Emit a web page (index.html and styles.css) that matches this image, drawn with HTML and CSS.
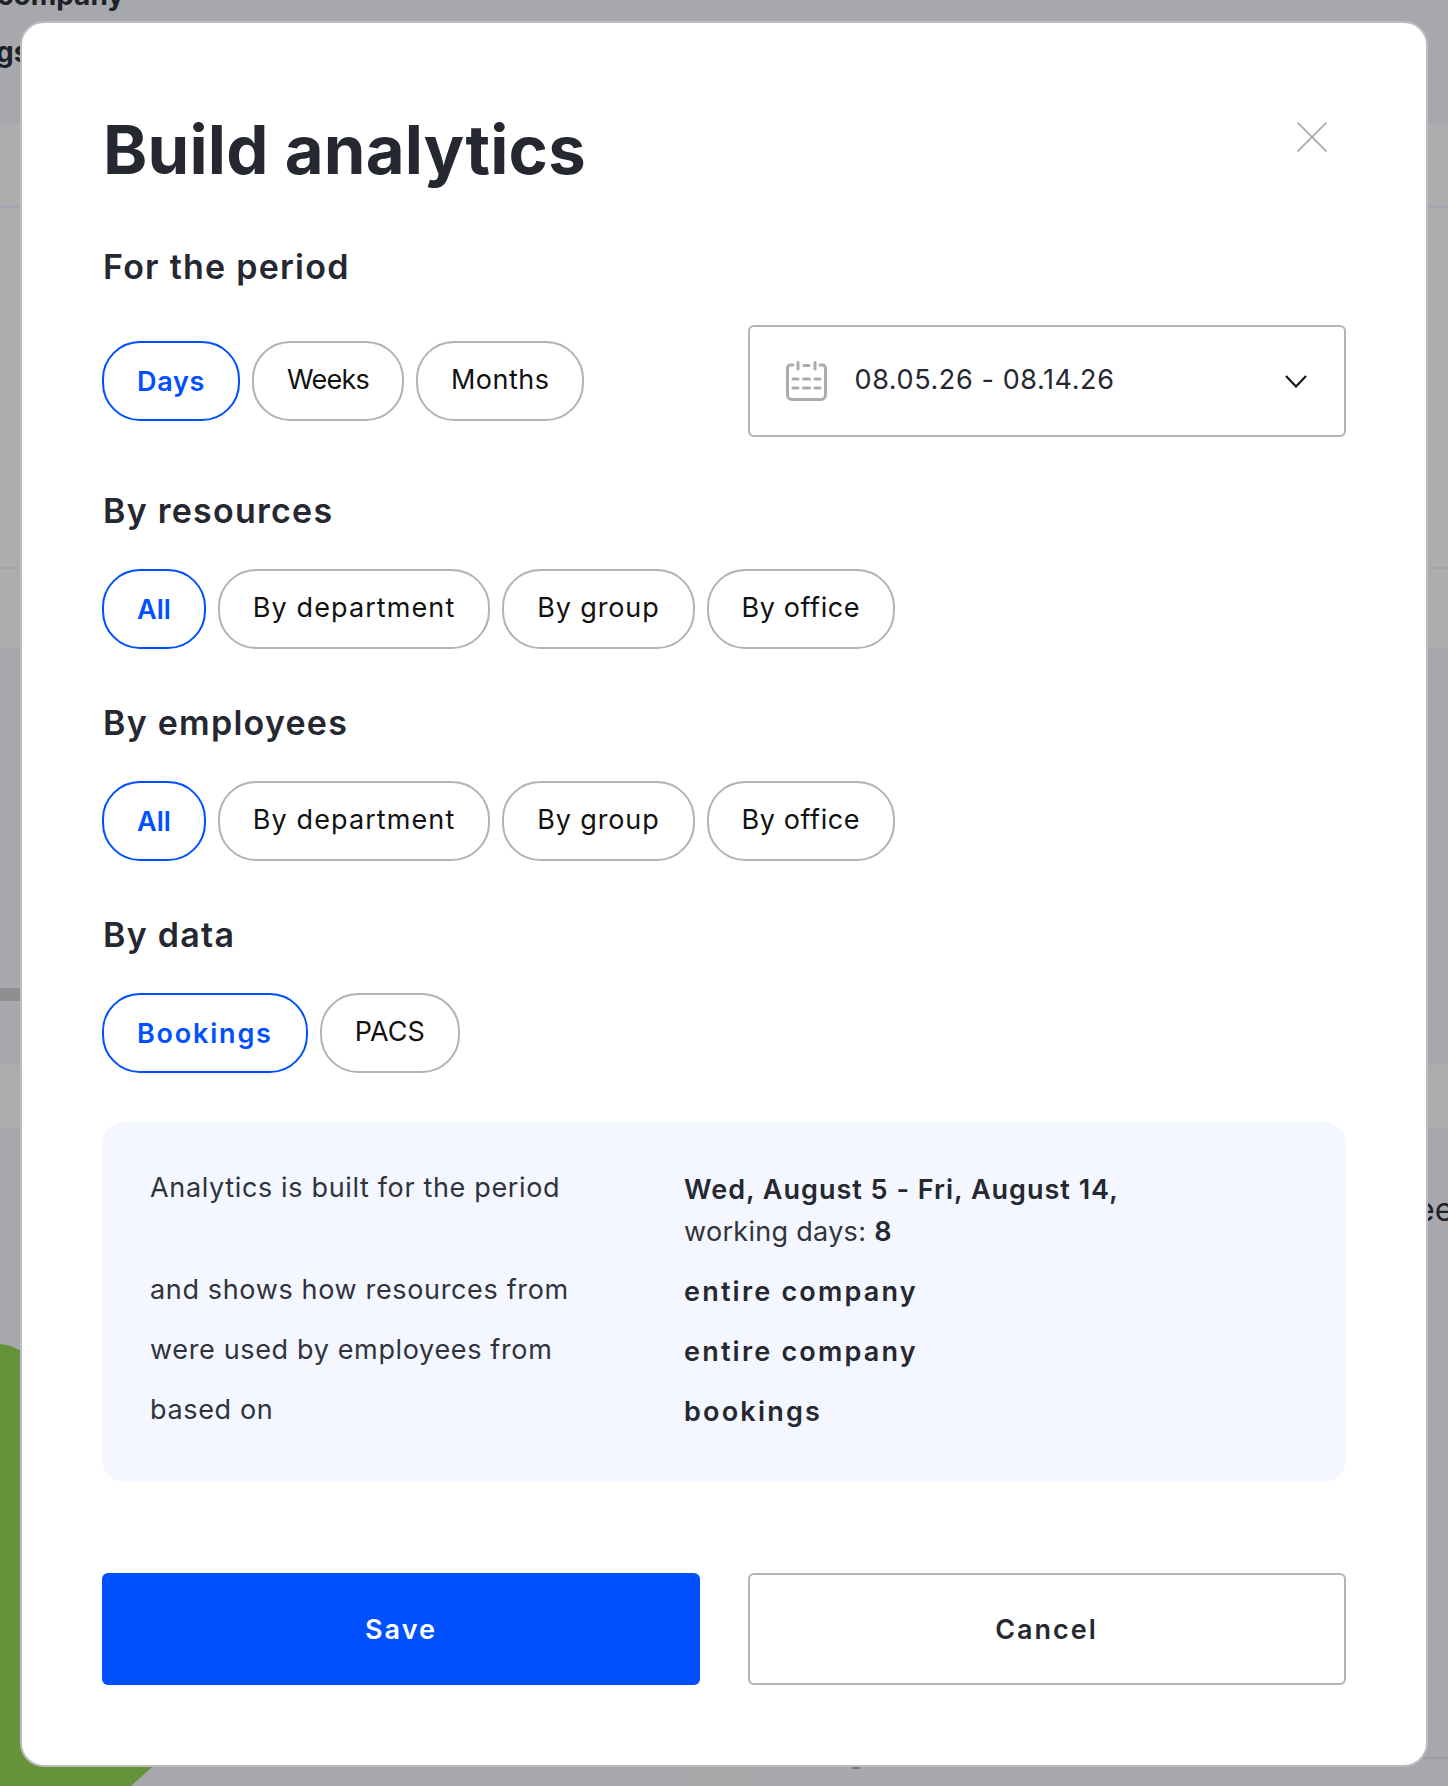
FILE: index.html
```html
<!DOCTYPE html>
<html lang="en">
<head>
<meta charset="utf-8">
<title>Build analytics</title>
<link rel="stylesheet" href="styles.css">
</head>
<body>
<div class="backdrop" aria-hidden="true">
  <div class="band band-top"></div>
  <div class="band band-a"></div>
  <div class="band band-line"></div>
  <div class="band band-b"></div>
  <div class="band band-line"></div>
  <div class="band band-c"></div>
  <div class="band band-d"></div>
  <div class="band band-g"></div>
  <span class="bg-text bg-company">company</span>
  <span class="bg-text bg-gs">gs</span>
  <span class="bg-text bg-ee">ee</span>
  <svg class="bg-green" width="160" height="442" viewBox="0 0 160 442"><path d="M0 0C40 4 90 60 110 200C120 290 140 380 152 423L131 442H0Z" fill="#66923b"/></svg>
  <div class="bg-tick"></div>
  <div class="bg-foot"></div>
  <div class="bg-mark"></div>
  <div class="bg-rule"></div>
</div>
<main class="modal">
  <header class="modal-head">
    <h1>Build analytics</h1>
    <svg class="close" width="30" height="30" viewBox="0 0 30 30"><path d="M.5.5l29 29M29.500.5l-29 29" fill="none" stroke="#a9a9a9" stroke-width="1.700"/></svg>
  </header>
  <h2 class="h-period">For the period</h2>
  <div class="period-row">
    <div class="pills">
      <span class="pill on p-days">Days</span><span class="pill p-weeks">Weeks</span><span class="pill p-months">Months</span>
    </div>
    <div class="date">
      <svg width="41" height="40" viewBox="0 0 41 40" fill="none" stroke="#acacac" stroke-width="3" stroke-linecap="round"><path d="M7 4H4.500A3 3 0 0 0 1.500 7V34a4.500 4.500 0 0 0 4.500 4.500H35a4.500 4.500 0 0 0 4.500-4.500V7a3 3 0 0 0-3-3H34M12 1.500V8M29 1.500V8M18 4.500h5M7 18h5M17.500 18h6M29 18h5M7 27h5M17.500 27h6M29 27h5"/></svg>
      <span class="date-text">08.05.26 - 08.14.26</span>
      <svg class="chev" width="22" height="13" viewBox="0 0 22 13"><path d="M1 1l10 10.500L21 1" fill="none" stroke="#16181d" stroke-width="2.200"/></svg>
    </div>
  </div>
  <h2>By resources</h2>
  <div class="pills">
    <span class="pill on">All</span><span class="pill p-dept">By department</span><span class="pill p-group">By group</span><span class="pill p-office">By office</span>
  </div>
  <h2>By employees</h2>
  <div class="pills">
    <span class="pill on">All</span><span class="pill p-dept">By department</span><span class="pill p-group">By group</span><span class="pill p-office">By office</span>
  </div>
  <h2>By data</h2>
  <div class="pills">
    <span class="pill on p-bookings">Bookings</span><span class="pill p-pacs">PACS</span>
  </div>
  <section class="info">
    <p class="lbl">Analytics is built for the period</p>
    <p class="val first"><b>Wed, August 5 - Fri, August 14,</b><br>working days: <b>8</b></p>
    <p class="lbl">and shows how resources from</p>
    <p class="val"><b class="spaced">entire company</b></p>
    <p class="lbl">were used by employees from</p>
    <p class="val"><b class="spaced">entire company</b></p>
    <p class="lbl">based on</p>
    <p class="val"><b class="spaced">bookings</b></p>
  </section>
  <div class="actions">
    <button class="btn save">Save</button>
    <button class="btn cancel">Cancel</button>
  </div>
</main>
</body>
</html>
```
FILE: styles.css
```css
* { box-sizing: border-box; }
html, body { margin: 0; padding: 0; }
body {
  width: 1448px;
  height: 1786px;
  position: relative;
  overflow: hidden;
  background: #a7a8ad;
  font-family: Inter, "Liberation Sans", sans-serif;
  color: #252831;
}
.backdrop {
  position: absolute;
  inset: 0;
  display: flex;
  flex-direction: column;
  overflow: hidden;
}
.band { width: 100%; flex: none; }
.band-top { height: 125px; background: #a7a8ad; }
.band-a { height: 81px; background: #adadad; }
.band-line { height: 2px; background: #a1a4b1; }
.band-b { height: 359px; background: #adadad; }
.band-c { height: 79px; background: #adadad; }
.band-d { height: 417px; background: #a7a8ad; }
.band-g { height: 64px; background: #adadad; }
.bg-text { position: absolute; font-weight: 700; color: #1f2128; font-size: 28px; line-height: 1; }
.bg-company { left: -3px; top: -19px; }
.bg-gs { left: -4px; top: 38px; }
.bg-ee { left: 1416px; top: 1194px; font-size: 32px; font-weight: 400; }
.bg-green { position: absolute; left: 0; top: 1344px; }
.bg-tick { position: absolute; left: 0; top: 988px; width: 30px; height: 13px; background: #8f8f8f; }
.bg-foot { position: absolute; left: 692px; top: 1760px; width: 64px; height: 26px; background: #a9a9a9; }
.bg-mark { position: absolute; left: 852px; top: 1767px; width: 8px; height: 1.500px; background: #77787c; }
.bg-rule { position: absolute; left: 1380px; top: 1757px; width: 68px; height: 2px; background: #9b9ca2; }
.modal {
  position: relative;
  width: 1407.500px;
  height: 1746px;
  margin: 21px 0 0 20px;
  padding: 0 80px;
  background: #fff;
  border: 2.500px solid #bcbcbc;
  border-radius: 24px;
}
.modal-head {
  height: 191px;
  display: flex;
  justify-content: space-between;
  align-items: flex-start;
}
.modal-head h1 {
  margin: 0 0 0 1px;
  padding-top: 87px;
  font-size: 67px;
  line-height: 80px;
  font-weight: 700;
  letter-spacing: .2px;
}
.close { margin: 99px 19px 0 0; }
h2 {
  margin: 0 0 0 1px;
  font-size: 34px;
  line-height: 40px;
  font-weight: 600;
  height: 40px;
  letter-spacing: 1.250px;
}
.h-period { margin-top: 33px; }
.pills { display: flex; gap: 12px; }
.pill {
  display: flex;
  align-items: center;
  justify-content: center;
  height: 80px;
  padding: 0 33px 4px;
  border: 2px solid #b3b3b3;
  border-radius: 38px;
  font-size: 27px;
  color: #111;
}
.pill.on { padding: 1px 33px 0; border-color: #0050ff; color: #0050ff; font-weight: 600; }
.p-days { letter-spacing: .7px; }
.p-weeks { letter-spacing: -.8px; }
.p-months { letter-spacing: .5px; }
.p-dept { letter-spacing: 1.100px; }
.p-group { letter-spacing: .85px; }
.p-office { letter-spacing: .6px; }
.p-bookings { letter-spacing: 1.800px; }
.period-row {
  display: flex;
  justify-content: space-between;
  align-items: center;
  height: 112px;
  margin-top: 38px;
}
.date {
  width: 598px;
  height: 112px;
  display: flex;
  align-items: center;
  padding: 0 36px;
  border: 2px solid #b3b3b3;
  border-radius: 6px;
}
.date-text { margin: 0 0 4px 28px; font-size: 27px; font-weight: 400; letter-spacing: .6px; color: #252831; }
.chev { margin-left: auto; margin-right: 1px; }
.period-row + h2 { margin-top: 54px; }
.pills + h2 { margin-top: 54px; }
h2 + .pills { margin-top: 38px; }
.info {
  margin-top: 49px;
  height: 360px;
  padding: 45px 48px 0;
  display: grid;
  grid-template-columns: 534px 1fr;
  grid-auto-rows: min-content;
  background: #f4f7ff;
  border-radius: 22px;
  font-size: 27px;
  line-height: 42px;
}
.info p { margin: 0 0 18px; }
.info .val { margin-bottom: 16px; padding-top: 2px; }
.lbl { letter-spacing: .65px; color: #30333c; }
.val { color: #30333c; letter-spacing: .3px; }
.val b { font-weight: 600; letter-spacing: 1px; color: #252831; }
.val b.spaced { letter-spacing: 2.200px; }
.actions {
  display: flex;
  justify-content: space-between;
  margin-top: 91px;
}
.btn {
  width: 598px;
  height: 112px;
  border-radius: 6px;
  font: 600 27px Inter, "Liberation Sans", sans-serif;
  letter-spacing: 2px;
}
.save { background: #0050ff; color: #fff; border: 0; }
.cancel { background: #fff; color: #252831; border: 2px solid #b3b3b3; }
```
